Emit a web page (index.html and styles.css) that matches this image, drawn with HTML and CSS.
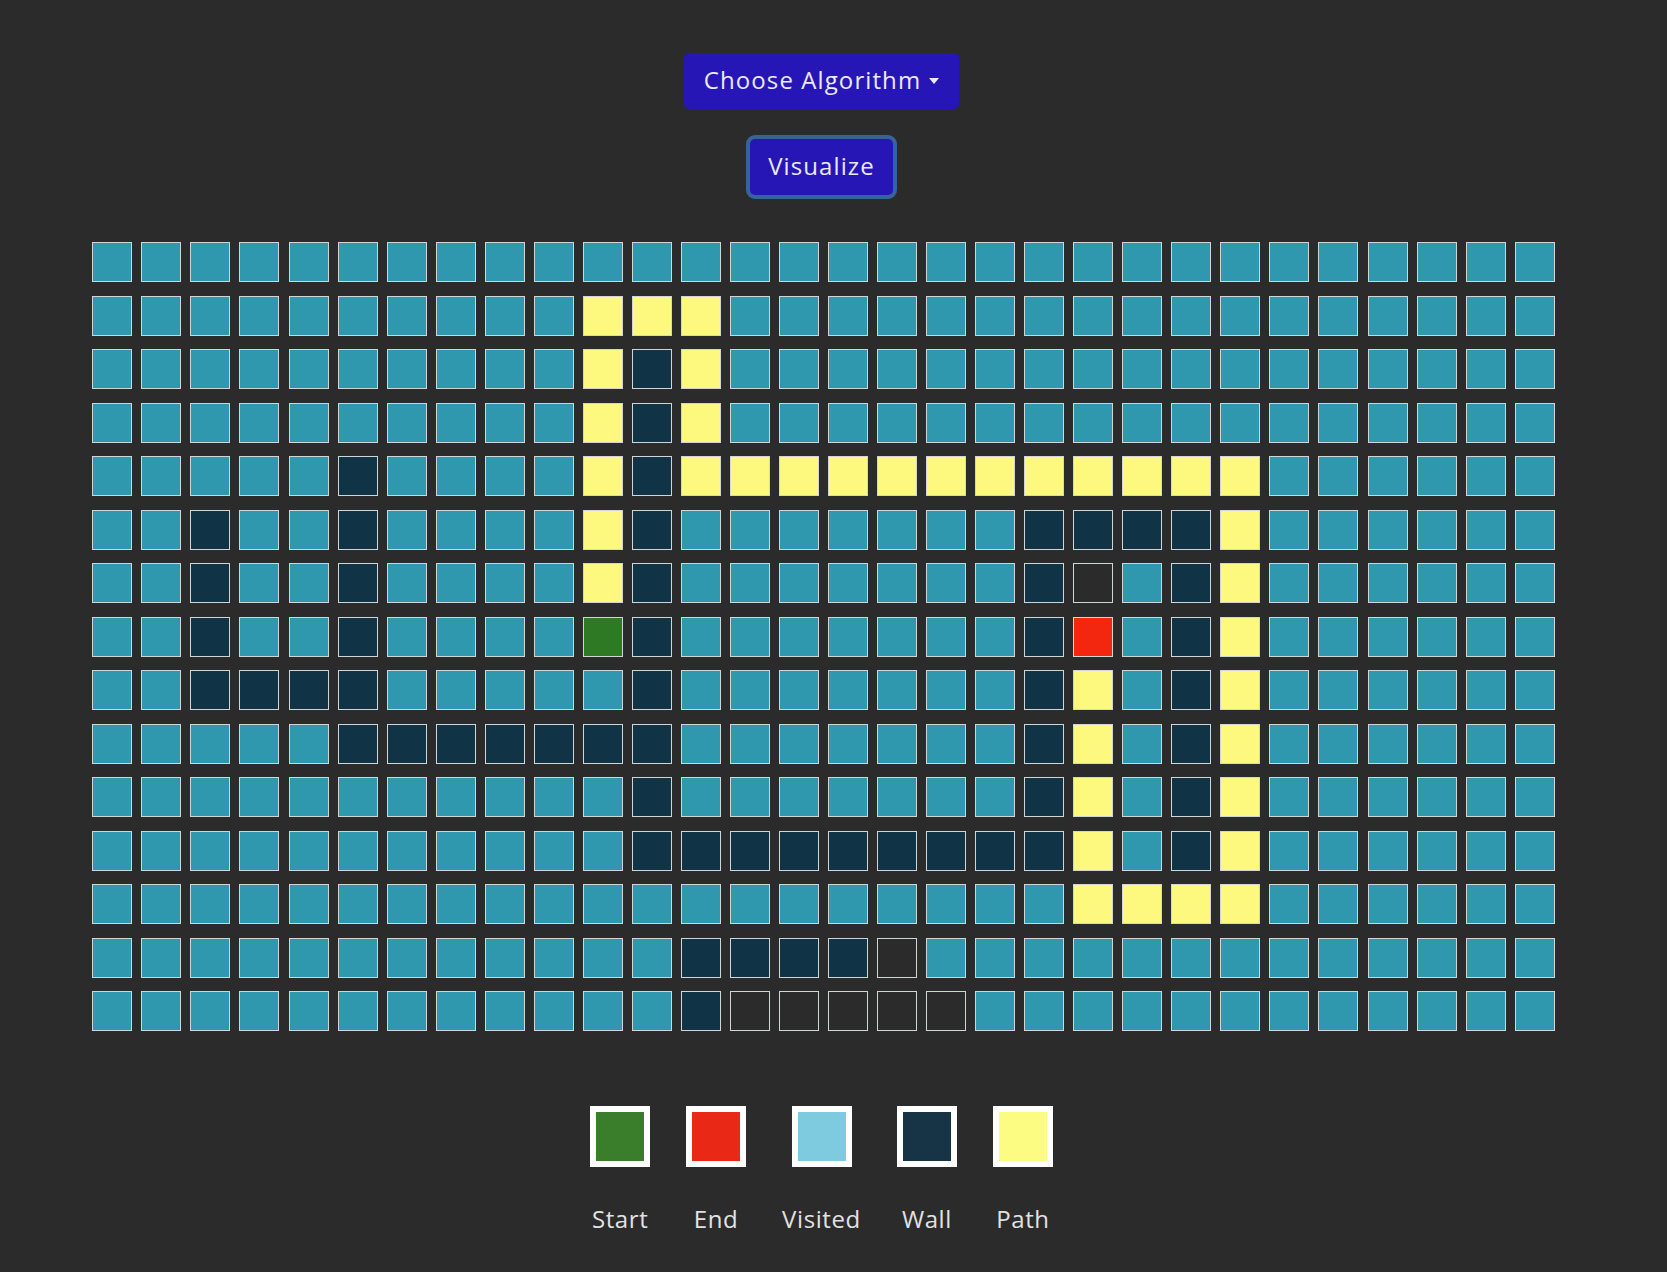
FILE: index.html
```html
<!DOCTYPE html>
<html lang="en">
<head>
    <meta charset="UTF-8">
    <meta name="viewport" content="width=device-width, initial-scale=1.0">
    <title>Pathfinding Visualizer</title>
    <link rel="stylesheet" href="styles.css">
</head>
<body>
    <div class="app">
        <div class="controls">
            <button class="btn dropdown-toggle" type="button">Choose Algorithm</button>
            <button class="btn btn-focus" type="button">Visualize</button>
        </div>

        <div id="grid" class="grid"></div>

        <div class="legend">
            <div class="legend-item">
                <div class="legend-box start"></div>
                <span>Start</span>
            </div>
            <div class="legend-item">
                <div class="legend-box end"></div>
                <span>End</span>
            </div>
            <div class="legend-item">
                <div class="legend-box visited-light"></div>
                <span>Visited</span>
            </div>
            <div class="legend-item">
                <div class="legend-box wall"></div>
                <span>Wall</span>
            </div>
            <div class="legend-item">
                <div class="legend-box path"></div>
                <span>Path</span>
            </div>
        </div>
    </div>
<script>
    // . visited, w wall, p path, s start, e end, o unvisited
    const rows = [
        "..............................",
        "..........ppp.................",
        "..........pwp.................",
        "..........pwp.................",
        ".....w....pwpppppppppppp......",
        "..w..w....pw.......wwwwp......",
        "..w..w....pw.......wo.wp......",
        "..w..w....sw.......we.wp......",
        "..wwww.....w.......wp.wp......",
        ".....wwwwwww.......wp.wp......",
        "...........w.......wp.wp......",
        "...........wwwwwwwwwp.wp......",
        "....................pppp......",
        "............wwwwo.............",
        "............wooooo............"
    ];

    const types = { ".": "visited", "w": "wall", "p": "path", "s": "start", "e": "end", "o": "" };
    const grid = document.getElementById("grid");

    rows.forEach(function (row) {
        for (const ch of row) {
            const cell = document.createElement("div");
            cell.className = "node " + types[ch];
            grid.appendChild(cell);
        }
    });
</script>
</body>
</html>
```

FILE: styles.css
```css
body {
    font-family: "Open Sans", Arial, sans-serif;
    background-color: #2b2b2b;
    color: #e2e2e2;
    margin: 0;
    padding: 0;
}

.app {
    margin-right: 24px;
    display: flex;
    flex-direction: column;
    align-items: center;
}

.controls {
    display: flex;
    flex-direction: column;
    align-items: center;
    gap: 30px;
    padding-top: 53px;
}

.btn {
    font-family: inherit;
    font-size: 24px;
    letter-spacing: 1.1px;
    color: #ece9ff;
    background-color: #2716b6;
    border: none;
    border-radius: 5px;
    height: 56px;
    padding: 0 20px 4px;
    cursor: pointer;
}

.btn:hover {
    background-color: #1f0f99;
}

.dropdown-toggle::after {
    content: "";
    display: inline-block;
    margin-left: 8px;
    vertical-align: 5px;
    border-top: 6px solid #ece9ff;
    border-left: 5px solid transparent;
    border-right: 5px solid transparent;
}

.btn-focus {
    padding: 0 18px 4px;
    box-shadow: 0 0 0 4px #35649a;
}

.grid {
    display: grid;
    grid-template-columns: repeat(30, 40px);
    column-gap: 9.05px;
    row-gap: 13.5px;
    margin-top: 47px;
    margin-left: 4px;
}

.node {
    width: 40px;
    height: 40px;
    box-sizing: border-box;
    border: 1px solid #d0d5d6;
    background-color: #2b2b2b;
}

.node.visited {
    background-color: #2f97ae;
}

.node.wall {
    background-color: #113346;
}

.node.path {
    background-color: #fdf97e;
}

.node.start {
    background-color: #2e7a24;
}

.node.end {
    background-color: #f3270f;
}

.legend {
    display: flex;
    gap: 36px;
    margin-top: 75px;
}

.legend-item {
    display: flex;
    flex-direction: column;
    align-items: center;
    gap: 38px;
    font-size: 24px;
    line-height: 1.2;
    letter-spacing: 0.6px;
}

.legend-box {
    width: 48px;
    height: 49px;
    border: 6px solid #fff;
}

.legend-box.start {
    background-color: #3a7d2b;
}

.legend-box.end {
    background-color: #ea2816;
}

.legend-box.visited-light {
    background-color: #7ecbdf;
}

.legend-box.wall {
    background-color: #173447;
}

.legend-box.path {
    background-color: #fdfc82;
}
```
